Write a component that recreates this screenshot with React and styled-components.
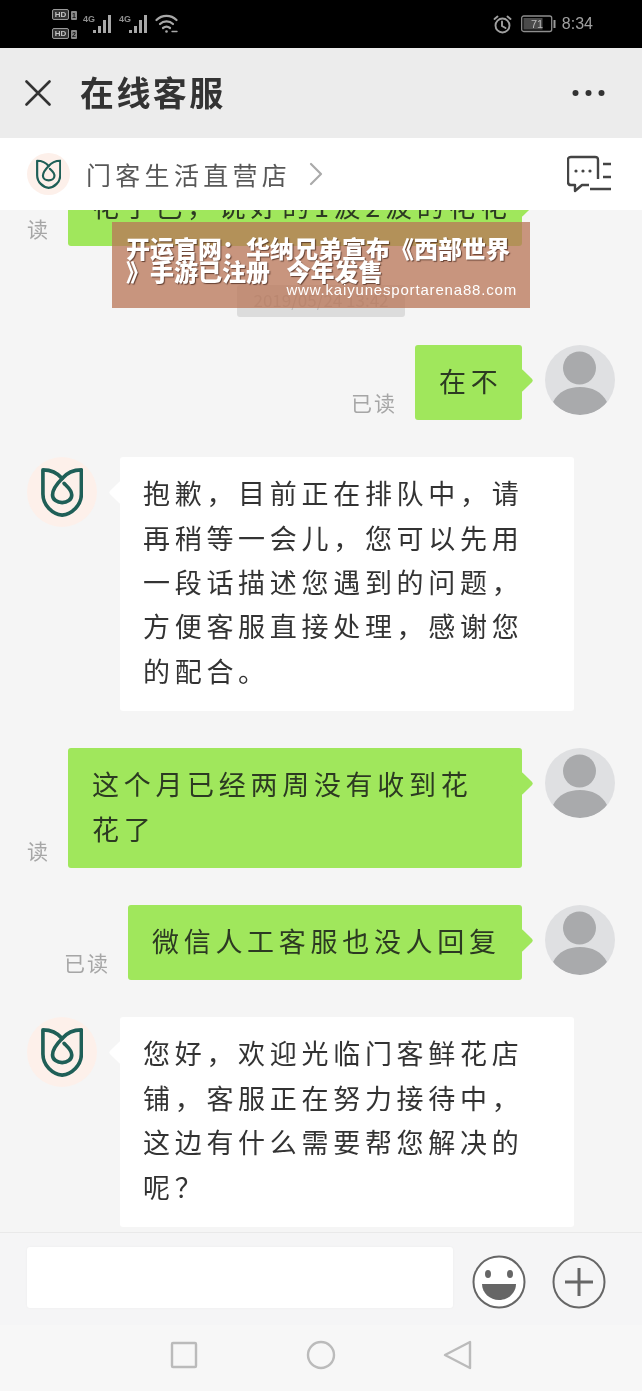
import styled, { createGlobalStyle } from 'styled-components';

const GlobalStyle = createGlobalStyle`
  html, body {
    margin: 0;
    padding: 0;
    background: #f5f5f5;
  }
`

const Phone = styled.div`
  position: relative;
  width: 642px;
  height: 1391px;
  display: flex;
  flex-direction: column;
  overflow: hidden;
  background: #f5f5f5;
  font-family: "Noto Sans CJK SC", "Noto Sans", sans-serif;
  filter: blur(0.4px);
`

const StatusBar = styled.div`
  height: 48px;
  flex: none;
  display: flex;
  align-items: center;
  justify-content: space-between;
  padding: 0 49px 0 52px;
  background: #000;
`

const StatusGroup = styled.div`
  display: flex;
  align-items: center;
  gap: 6px;
`

const SimColumn = styled.div`
  display: flex;
  flex-direction: column;
  gap: 8px;
`

const SimRow = styled.div`
  display: flex;
  align-items: flex-end;
  gap: 2px;
`

const HdBadge = styled.span`
  display: block;
  width: 13px;
  height: 9px;
  padding: 0 1px;
  border: 1px solid #9a9a9a;
  border-radius: 2px;
  background: #333;
  color: #c4c4c4;
  font: bold 8px/9px "Liberation Sans", sans-serif;
  text-align: center;
`

const SimNumber = styled.span`
  display: block;
  width: 6px;
  height: 9px;
  border-radius: 1px;
  background: #8a8a8a;
  color: #111;
  font: bold 7px/9px "Liberation Sans", sans-serif;
  text-align: center;
`

const Signal = styled.div`
  display: flex;
  align-items: flex-start;
`

const NetLabel = styled.span`
  width: 10px;
  margin-top: 4px;
  font: bold 9px/10px "Liberation Sans", sans-serif;
  color: #8f8f8f;
`

const AlarmIcon = styled.svg`
  flex: none;
  margin-right: 3px;
`

const Clock = styled.span`
  font: 16px/20px "Liberation Sans", sans-serif;
  color: #a0a0a0;
`

const Header = styled.div`
  height: 90px;
  flex: none;
  display: flex;
  align-items: center;
  padding: 0 37px 0 25px;
  background: #ececec;
`

const Title = styled.h1`
  margin: 0 0 2px 29px;
  flex: 1;
  font-size: 34px;
  line-height: 40px;
  font-weight: 700;
  letter-spacing: 2.4px;
  color: #333;
  white-space: nowrap;
`

const ShopBar = styled.div`
  height: 72px;
  flex: none;
  display: flex;
  align-items: center;
  padding: 0 31px 0 27px;
  background: #fff;
  position: relative;
  z-index: 1;
`

const ShopName = styled.span`
  margin-left: 16px;
  font-size: 25px;
  letter-spacing: 4.3px;
  line-height: 32px;
  color: #585858;
`

const Chevron = styled.svg`
  margin-left: 18px;
  flex: none;
`

const Spacer = styled.div`
  flex: 1;
`

const Chat = styled.div`
  flex: 1;
  min-height: 0;
  display: flex;
  flex-direction: column;
  justify-content: flex-end;
  overflow: hidden;
  padding: 0 27px 5px;
`

const TimeRow = styled.div`
  display: flex;
  flex: none;
  justify-content: center;
  margin: 39px 0 28px;
`

const TimePill = styled.span`
  width: 168px;
  height: 32px;
  border-radius: 3px;
  background: #dcdcdc;
  color: #bdbdbd;
  font-size: 17px;
  line-height: 30px;
  text-align: center;
`

const Row = styled.div`
  display: flex;
  align-items: flex-start;
  margin-bottom: ${p => p.$after}px;
  flex: none;
`

const UserRow = styled(Row)`
  justify-content: flex-end;
`

const ClippedRow = styled(UserRow)`
  padding-right: 93px;
`

const Avatar = styled.div`
  width: 70px;
  height: 70px;
  flex: none;
  border-radius: 50%;
  overflow: hidden;
`

const UserAvatar = styled(Avatar)`
  background: #dfe0e2;
  margin-left: 23px;
`

const BotAvatar = styled(Avatar)`
  display: flex;
  align-items: center;
  justify-content: center;
  background: #fdf0ea;
  margin-right: 23px;
`

const SmallBotAvatar = styled(BotAvatar)`
  width: 43px;
  height: 42px;
  margin-right: 0;
`

const Bubble = styled.div`
  position: relative;
  flex: none;
  box-sizing: border-box;
  border-radius: 3px;
  font-size: 27px;
  line-height: 44.4px;
  letter-spacing: 4.7px;
  &::after {
    content: "";
    position: absolute;
    top: 27px;
    width: 17px;
    height: 17px;
    border-radius: 2px;
    transform: rotate(45deg);
    background: inherit;
  }
`

const GreenBubble = styled(Bubble)`
  width: ${p => p.$width}px;
  padding: 14px 0 17px 24px;
  background: #a0e75c;
  color: #2c3a22;
  white-space: nowrap;
  &::after {
    right: -8px;
  }
`

const WhiteBubble = styled(Bubble)`
  width: 454px;
  padding: 14px 20px 18px 23px;
  background: #fff;
  color: #333;
  &::after {
    left: -8px;
  }
`

const ReadLabel = styled.span`
  align-self: flex-end;
  margin: 0 18px 3px 0;
  font-size: 21px;
  line-height: 30px;
  letter-spacing: 2px;
  color: #a6a6a6;
  white-space: nowrap;
`

const Composer = styled.div`
  height: 93px;
  flex: none;
  box-sizing: border-box;
  display: flex;
  align-items: flex-start;
  padding: 14px 36px 0 27px;
  border-top: 1px solid #e9e9e9;
  background: #f5f5f6;
`

const Input = styled.div`
  width: 427px;
  height: 61px;
  border-radius: 3px;
  background: #fff;
  box-shadow: 0 0 2px #ececec;
`

const RoundButton = styled.svg`
  flex: none;
  margin: 8px 0 0 ${p => p.$left}px;
`

const NavBar = styled.div`
  height: 66px;
  flex: none;
  display: flex;
  align-items: center;
  justify-content: center;
  gap: 107px;
  padding-bottom: 6px;
  box-sizing: border-box;
  background: #f7f7f7;
`

const Watermark = styled.div`
  position: absolute;
  left: 112px;
  top: 222px;
  width: 418px;
  height: 86px;
  box-sizing: border-box;
  padding: 14px 14px 0;
  z-index: 2;
  background: rgba(185, 118, 88, 0.76);
  color: #fff;
`

const WatermarkTitle = styled.div`
  font-size: 24px;
  line-height: 23px;
  font-weight: 900;
  white-space: pre;
  text-shadow: 1px 1px 1px rgba(60, 30, 20, 0.7);
`

const WatermarkUrl = styled.div`
  position: absolute;
  right: 13px;
  bottom: 10px;
  font: 15px/17px "Liberation Sans", sans-serif;
  letter-spacing: 0.82px;
`

function Logo({ size }) {
  return (
    <svg width={size * 44 / 52} height={size} viewBox="0 0 44 52" fill="none" stroke="#1f5f57" strokeWidth="3.8" strokeLinejoin="round" strokeLinecap="round">
      <path d="M2 3 C10 3 17 6 22 12 C27 6 34 3 42 3 L42 28 C42 40 32 49 22 50 C12 49 2 40 2 28 Z" />
      <path d="M22 12 C15 19 12 24 12 29 C12 34 17 37 22 37 C27 37 32 34 32 29 C32 24 28 21 24 17" />
    </svg>
  )
}

function Person() {
  return (
    <svg width="70" height="70" viewBox="0 0 70 70">
      <ellipse cx="34.5" cy="23" rx="16.5" ry="16.5" fill="#a9aaac" />
      <path d="M8 57 C13 47 23 42 35 42 C47 42 57 47 62 57 C55 66 45 70 35 70 C25 70 15 66 8 57 Z" fill="#a9aaac" />
    </svg>
  )
}

function Bars() {
  return (
    <svg width="20" height="28" viewBox="0 0 20 28" fill="#a8a8a8">
      <rect x="0" y="20" width="3" height="3" />
      <rect x="5" y="16" width="3" height="7" />
      <rect x="10" y="10" width="3" height="13" />
      <rect x="15" y="5" width="3" height="18" />
    </svg>
  )
}

export default function App() {
  return (
    <Phone>
      <GlobalStyle />
      <StatusBar>
        <StatusGroup>
          <SimColumn>
            <SimRow><HdBadge>HD</HdBadge><SimNumber>1</SimNumber></SimRow>
            <SimRow><HdBadge>HD</HdBadge><SimNumber>2</SimNumber></SimRow>
          </SimColumn>
          <Signal><NetLabel>4G</NetLabel><Bars /></Signal>
          <Signal><NetLabel>4G</NetLabel><Bars /></Signal>
          <svg width="23" height="20" viewBox="0 0 23 20" fill="none" stroke="#a8a8a8" strokeWidth="2.2" strokeLinecap="round">
            <path d="M1.5 6 C7 0.5 16 0.5 21.5 6" />
            <path d="M5 10 C8.5 6.5 14.5 6.5 18 10" />
            <path d="M8 14 C10 12.5 13 12.5 15 14" />
            <circle cx="11.5" cy="17.5" r="1.3" fill="#a8a8a8" stroke="none" />
            <path d="M17 17.5 H22" strokeWidth="1.4" />
          </svg>
        </StatusGroup>
        <StatusGroup>
          <AlarmIcon width="19" height="19" viewBox="0 0 19 19" fill="none" stroke="#a0a0a0" strokeWidth="1.9" strokeLinecap="round">
            <circle cx="9.5" cy="10.5" r="7" />
            <path d="M9 6.5 V11 L12.5 13" />
            <path d="M1.5 4 L4.5 1.5 M17.5 4 L14.5 1.5" />
          </AlarmIcon>
          <svg width="35" height="18" viewBox="0 0 35 18">
            <rect x="0.7" y="1" width="30" height="15.5" rx="2" fill="none" stroke="#8e8e8e" strokeWidth="1.3" />
            <rect x="2.5" y="3" width="19" height="11.5" fill="#4a4a4a" />
            <rect x="32.5" y="5" width="2" height="8" fill="#999" />
            <text x="16" y="13" fontSize="11" fill="#bbb" textAnchor="middle" fontFamily="Liberation Sans">71</text>
          </svg>
          <Clock>8:34</Clock>
        </StatusGroup>
      </StatusBar>

      <Header>
        <svg width="26" height="26" viewBox="0 0 26 26" stroke="#333" strokeWidth="2.6" strokeLinecap="round">
          <path d="M1.5 1.5 L24.5 24.5 M24.5 1.5 L1.5 24.5" />
        </svg>
        <Title>在线客服</Title>
        <svg width="33" height="8" viewBox="0 0 33 8" fill="#333">
          <circle cx="3.5" cy="4" r="3" />
          <circle cx="16.5" cy="4" r="3" />
          <circle cx="29.5" cy="4" r="3" />
        </svg>
      </Header>

      <ShopBar>
        <SmallBotAvatar><Logo size={30} /></SmallBotAvatar>
        <ShopName>门客生活直营店</ShopName>
        <Chevron width="14" height="24" viewBox="0 0 14 24" fill="none" stroke="#aaa" strokeWidth="2.2" strokeLinecap="round" strokeLinejoin="round">
          <path d="M2 2 L12 12 L2 22" />
        </Chevron>
        <Spacer />
        <svg width="44" height="38" viewBox="0 0 44 38" fill="none" stroke="#444" strokeWidth="2.4" strokeLinejoin="round">
          <path d="M31 24 V5 Q31 2 28 2 H4 Q1 2 1 5 V27 Q1 30 4 30 H8 V36 L15 30 H22" />
          <circle cx="9" cy="16" r="1.6" fill="#444" stroke="none" />
          <circle cx="16" cy="16" r="1.6" fill="#444" stroke="none" />
          <circle cx="23" cy="16" r="1.6" fill="#444" stroke="none" />
          <path d="M36 9 H44 M36 22 H44 M23 34 H44" />
        </svg>
      </ShopBar>

      <Chat>
        <ClippedRow $after={0}>
          <ReadLabel>读</ReadLabel>
          <GreenBubble $width={454}>花了已，说好的1波2波的花花</GreenBubble>
        </ClippedRow>
        <TimeRow><TimePill>2019/05/24 13:42</TimePill></TimeRow>
        <UserRow $after={37}>
          <ReadLabel>已读</ReadLabel>
          <GreenBubble $width={107}>在不</GreenBubble>
          <UserAvatar><Person /></UserAvatar>
        </UserRow>
        <Row $after={37}>
          <BotAvatar><Logo size={50} /></BotAvatar>
          <WhiteBubble>抱歉，目前正在排队中，请再稍等一会儿，您可以先用一段话描述您遇到的问题，方便客服直接处理，感谢您的配合。</WhiteBubble>
        </Row>
        <UserRow $after={37}>
          <ReadLabel>读</ReadLabel>
          <GreenBubble $width={454}>这个月已经两周没有收到花<br />花了</GreenBubble>
          <UserAvatar><Person /></UserAvatar>
        </UserRow>
        <UserRow $after={37}>
          <ReadLabel>已读</ReadLabel>
          <GreenBubble $width={394}>微信人工客服也没人回复</GreenBubble>
          <UserAvatar><Person /></UserAvatar>
        </UserRow>
        <Row $after={0}>
          <BotAvatar><Logo size={50} /></BotAvatar>
          <WhiteBubble>您好，欢迎光临门客鲜花店铺，客服正在努力接待中，这边有什么需要帮您解决的呢？</WhiteBubble>
        </Row>
      </Chat>

      <Composer>
        <Input />
        <RoundButton $left={19} width="54" height="54" viewBox="0 0 54 54">
          <circle cx="27" cy="27" r="25.5" fill="#fff" stroke="#666" strokeWidth="2" />
          <ellipse cx="16" cy="19" rx="3" ry="4" fill="#666" />
          <ellipse cx="38" cy="19" rx="3" ry="4" fill="#666" />
          <path d="M10 29 H44 C44 38 36 45 27 45 C18 45 10 38 10 29 Z" fill="#666" />
        </RoundButton>
        <RoundButton $left={26} width="54" height="54" viewBox="0 0 54 54">
          <circle cx="27" cy="27" r="25.5" fill="none" stroke="#666" strokeWidth="2" />
          <path d="M27 13 V41 M13 27 H41" stroke="#666" strokeWidth="3" />
        </RoundButton>
      </Composer>

      <NavBar>
        <svg width="30" height="30" viewBox="0 0 30 30" fill="none" stroke="#bbb" strokeWidth="2.4" strokeLinejoin="round">
          <rect x="3" y="3" width="24" height="24" rx="1" />
        </svg>
        <svg width="30" height="30" viewBox="0 0 30 30" fill="none" stroke="#bbb" strokeWidth="2.4">
          <circle cx="15" cy="15" r="13" />
        </svg>
        <svg width="30" height="30" viewBox="0 0 30 30" fill="none" stroke="#bbb" strokeWidth="2.4" strokeLinejoin="round">
          <path d="M27 2 V28 L2 15 Z" />
        </svg>
      </NavBar>

      <Watermark>
        <WatermarkTitle>开运官网：华纳兄弟宣布《西部世界{'\n'}》手游已注册   今年发售</WatermarkTitle>
        <WatermarkUrl>www.kaiyunesportarena88.com</WatermarkUrl>
      </Watermark>
    </Phone>
  )
}
